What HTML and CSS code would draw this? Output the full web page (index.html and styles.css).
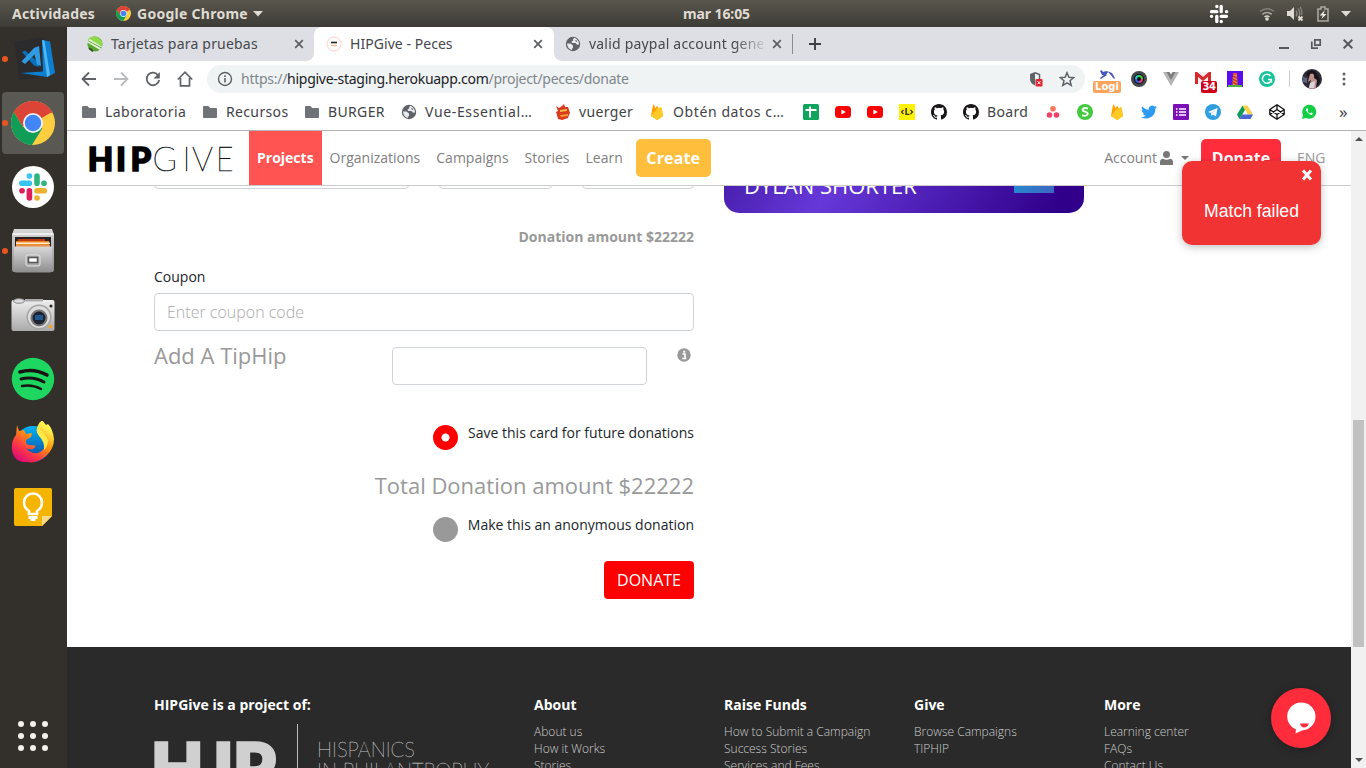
FILE: index.html
```html
<!DOCTYPE html>
<html lang="es">
<head>
<meta charset="utf-8">
<title>HIPGive - Peces</title>
<link rel="stylesheet" href="styles.css">
</head>
<body>
<svg class="defs" aria-hidden="true">
  <defs>
    <symbol id="chrome" viewBox="0 0 44 44"><circle cx="22" cy="22" r="22" fill="#ffcd40"/><path d="M22 22L3 11A22 22 0 0 1 41 11Z" fill="#db4437"/><path d="M3 11A22 22 0 0 0 21 44L31.500 27 22 22 12 26Z" fill="#0f9d58"/><path d="M3 11A22 22 0 0 1 41 12H22L12 26Z" fill="#db4437"/><circle cx="22" cy="22" r="10" fill="#f1f1f1"/><circle cx="22" cy="22" r="8.2" fill="#4285f4"/></symbol>
    <symbol id="folder" viewBox="0 0 16 14"><path d="M2 1h4.500l1.700 2H14q1 0 1 1v8q0 1-1 1H2q-1 0-1-1V2q0-1 1-1z" fill="#6f7377"/></symbol>
    <symbol id="globe" viewBox="0 0 16 16"><circle cx="8" cy="8" r="7.200" fill="#5f6368"/><path d="M2 7.500h3.500L8 9.500v2L6.500 14Q2.500 12.500 2 7.500zM9.500 1.800L8 3 8.300 4.500 6.500 5.500 7 7h3.500l1.500 1.700 2-.2Q14 4 9.500 1.800z" fill="#e9eaee"/><path d="M10.500 4.500l1.500 1" stroke="#5f6368" stroke-width="1.200"/></symbol>
    <symbol id="close" viewBox="0 0 10 10"><path d="M1.200 1.200l7.600 7.600M8.800 1.200L1.200 8.800" stroke="#5b5e62" stroke-width="1.700"/></symbol>
    <symbol id="fire" viewBox="0 0 16 16"><path d="M2 12L4 .8q.3-.8.8 0l1.900 3.400 1-1.900q.4-.6.8 0L14 12l-5.700 3.900z" fill="#ffa000"/><path d="M2 12l6-7.500 3.500-1.200q1-.5 1.200.4L14.300 12l-6 3.900z" fill="#ffca28"/></symbol>
    <symbol id="yt" viewBox="0 0 16 12"><rect width="16" height="12" rx="3.500" fill="#f00"/><path d="M6.400 3.500L10.700 6 6.400 8.500z" fill="#fff"/></symbol>
    <symbol id="github" viewBox="0 0 16 16"><path fill="#191717" d="M8 0C3.580 0 0 3.580 0 8c0 3.540 2.290 6.530 5.470 7.590.4.070.55-.17.55-.38 0-.19-.01-.82-.01-1.490-2.010.37-2.530-.49-2.690-.94-.09-.23-.48-.94-.82-1.130-.28-.15-.68-.52-.01-.53.63-.01 1.080.58 1.230.82.72 1.210 1.870.87 2.330.66.07-.52.28-.87.51-1.070-1.780-.2-3.640-.89-3.640-3.950 0-.87.31-1.590.82-2.150-.08-.2-.36-1.020.08-2.120 0 0 .67-.21 2.200.82a7.600 7.600 0 0 1 4 0c1.530-1.040 2.200-.82 2.200-.82.44 1.100.16 1.920.08 2.120.51.56.82 1.270.82 2.150 0 3.070-1.870 3.750-3.650 3.950.29.25.54.73.54 1.480 0 1.070-.01 1.930-.01 2.200 0 .21.15.46.55.38A8 8 0 0 0 16 8c0-4.420-3.580-8-8-8z"/></symbol>
    <linearGradient id="fox" x1=".8" y1="0" x2=".1" y2="1"><stop offset=".1" stop-color="#fff44f"/><stop offset=".4" stop-color="#ff980e"/><stop offset=".7" stop-color="#ff3647"/><stop offset="1" stop-color="#d00084"/></linearGradient>
    <linearGradient id="metal" x2="0" y2="1"><stop stop-color="#d8d8d8"/><stop offset="1" stop-color="#8e8e8e"/></linearGradient>
    <linearGradient id="silver" x2="0" y2="1"><stop stop-color="#eee"/><stop offset="1" stop-color="#aaa"/></linearGradient>
    <linearGradient id="foxblue" x2="0" y2="1"><stop stop-color="#00b3f4"/><stop offset="1" stop-color="#0a3f9a"/></linearGradient>
  </defs>
</svg>

<header class="topbar">
  <span class="tb-act">Actividades</span>
  <svg class="tb-chrome"><use href="#chrome"/></svg>
  <span class="tb-app">Google Chrome</span>
  <svg class="tb-caret" viewBox="0 0 10 6"><path d="M0 0h10L5 5.500z" fill="#dfdbd2"/></svg>
  <span class="tb-clock">mar 16:05</span>
  <svg class="tb-slack" viewBox="0 0 20 20"><g fill="none" stroke="#fff" stroke-width="3.300" stroke-linecap="round"><path d="M7.800 2.500h.1M2.500 7.700h5.300M12.200 2.500v5.200M17.500 7.700h.1M2.500 12.300h.1M7.800 12.300v5.200M12.200 12.300h5.300M12.200 17.500h.1"/></g></svg>
  <svg class="tb-wifi" viewBox="0 0 16 16"><g fill="none" stroke-width="1.500"><path d="M1 5.500q7-5.500 14 0" stroke="#827f77"/><path d="M3.300 8.300q4.700-3.700 9.400 0" stroke="#aaa69e"/><path d="M5.500 10.800q2.500-1.700 5 0" stroke="#dfdbd2"/></g><circle cx="8" cy="13" r="1.800" fill="#dfdbd2"/></svg>
  <svg class="tb-vol" viewBox="0 0 18 16"><path d="M1 5h3l4-4v13l-4-4H1z" fill="#dfdbd2"/><g fill="none" stroke="#8a877f" stroke-width="1.300"><path d="M10 4.500q2 3 0 6M12 2.500q3.500 5 0 10M14.200 1q2.500 4 1.500 8"/></g><path d="M12.500 10.500l4 4M16.500 10.500l-4 4" stroke="#dfdbd2" stroke-width="1.800"/></svg>
  <svg class="tb-bat" viewBox="0 0 12 16"><path d="M1 3h3V1h4v2h3v12H1z" fill="none" stroke="#aaa79f" stroke-width="1.600"/><path d="M8 4L2.700 9.500h3L4.500 13 9.500 8H6.500z" fill="#efece5"/></svg>
  <svg class="tb-caret2" viewBox="0 0 10 6"><path d="M0 0h10L5 5.500z" fill="#dfdbd2"/></svg>
</header>

<div class="desktop">
<aside class="dock">
  <div class="app run"><svg viewBox="0 0 44 44"><path d="M3.500 5L33 0l4 39-29 4z" fill="#2b2b2e"/><path d="M31 3l8 1.500 5 31.500-8 4L10 36l22-1.500z" fill="#0e7fd0"/><path d="M31 3l4.500 33 .5 4 3-1.700L33.500 3.500z" fill="#4fb6f5"/><path d="M11 15l3-1.500L28 26v4l-5-1.500z" fill="#0a70bb"/><path d="M28 9l2 20-4-1.500-2.500-10L14 27l-3.500-2.500L23 11z" fill="#309be2"/></svg></div>
  <div class="app run on"><svg><use href="#chrome"/></svg></div>
  <div class="app"><svg viewBox="0 0 44 44"><circle cx="22" cy="22" r="21" fill="#fff"/><g stroke-width="5.600" stroke-linecap="round"><path d="M18.400 11h.1M10.800 18.200h7.600" stroke="#36c5f0"/><path d="M26 11v7.200M33 18.200h.1" stroke="#2eb67d"/><path d="M11 25.700h.1M18.400 25.700v7.300" stroke="#e01e5a"/><path d="M26 25.700h7.300M26 33h.1" stroke="#ecb22e"/></g></svg></div>
  <div class="app run"><svg viewBox="0 0 44 44"><path d="M3 0h38l2 6v35q0 2-2 2H3q-2 0-2-2V6z" fill="url(#metal)"/><path d="M1.500 4h41v2h-41z" fill="#eee"/><path d="M4 8h36v12H4z" fill="#29221e"/><path d="M7 10h27v6H7z" fill="#b83a10"/><path d="M5 12h33v7H5z" fill="#f08020"/><path d="M5 13.500h34v1.500H5z" fill="#fff1d5"/><path d="M5 15.500h34v3H5z" fill="#e89244"/><path d="M3 17.500h38v24q0 2-2 2H5q-2 0-2-2z" fill="url(#metal)"/><rect x="15" y="26" width="14" height="11" rx="2" fill="#aaa" stroke="#e4e4e4"/><rect x="17.500" y="28.500" width="9" height="5" fill="#fff" stroke="#555" stroke-width="1.500"/></svg></div>
  <div class="app"><svg viewBox="0 0 44 44"><rect x=".5" y="7" width="43" height="31" rx="2" fill="url(#silver)"/><path d="M14 6h18v2.500H14z" fill="#aaa"/><ellipse cx="8" cy="8" rx="5.500" ry="2.300" fill="#ddd" stroke="#888"/><circle cx="28" cy="24" r="12.500" fill="#a5a5a5"/><circle cx="28" cy="24" r="11" fill="#ddd"/><circle cx="28" cy="25" r="8.500" fill="#777"/><circle cx="28" cy="25" r="6.500" fill="#1b2430"/><path d="M24 22h8v5h-8z" fill="#23568d"/><circle cx="40" cy="13" r="1.500" fill="#222"/><rect x="38" y="32" width="3" height="3" fill="#f5a51d"/></svg></div>
  <div class="app"><svg viewBox="0 0 44 44"><circle cx="22" cy="22" r="21.200" fill="#1ed760"/><g fill="none" stroke="#191414" stroke-linecap="round"><path d="M9 15q14-4 27 3" stroke-width="3.600"/><path d="M10 22q12-3 23 3" stroke-width="3"/><path d="M11 29q10-2 19 3" stroke-width="2.500"/></g></svg></div>
  <div class="app"><svg viewBox="0 -1 44 44"><circle cx="22" cy="22" r="18" fill="url(#foxblue)"/><path d="M6 3l2 6 5-1 2 4 6-1-1 4-5 3v3q2 3 6 2l4 1-3 3q-4 1-7-1 4 6 12 5 10-4 7-15-2-3-8-5 0-8 5-13l4 5 2-1q5 5 6 15 0 10-8 17-9 8-19 6Q3 41 1 28q-1-9 4-15z" fill="url(#fox)"/><path d="M29 0q-6 8-1 14 6 6 5 14 4-4 4-10-3-7-8-10z" fill="#ffe947"/></svg></div>
  <div class="app"><svg viewBox="0 0 44 44"><path d="M5 3h34q2 0 2 2v26L31 41H5q-2 0-2-2V5q0-2 2-2z" fill="#f5b400"/><path d="M31 41V31h10z" fill="#fbdc84"/><path d="M18 28v-3q-5-3-5-8.500a9 9 0 0 1 18 0q0 5.500-5 8.500v3z" transform="translate(0 1)" fill="none" stroke="#fff" stroke-width="2.600"/><path d="M17.500 31h9v3h-9zM19.500 34h5v2h-5z" fill="#fff"/></svg></div>
  <div class="grid9"><i></i><i></i><i></i><i></i><i></i><i></i><i></i><i></i><i></i></div>
</aside>

<section class="browser">
  <div class="tabs">
    <div class="tab left"><svg class="fav" viewBox="0 0 16 16"><circle cx="8" cy="8" r="7.600" fill="#5aa832"/><path d="M1 4q2-4 7-3.600Q13 1 15 6v4z" fill="#8ed94c"/><path d="M.5 6.500L13 14l2-3.500L2.500 3z" fill="#e9f6df"/><path d="M1.500 5l13 7" stroke="#5fae35" stroke-width="1"/><path d="M2 12l4 3.200" stroke="#33511f" stroke-width="2"/></svg><span class="t1">Tarjetas para pruebas</span><svg class="x"><use href="#close"/></svg></div>
    <div class="tabslot"><div class="tab active"><svg class="fav" viewBox="0 0 16 16"><circle cx="8" cy="8" r="7" fill="#fff" stroke="#ffd0cc"/><path d="M5 6.500h6" stroke="#222" stroke-width="1.600"/><path d="M5 9.500h6" stroke="#ffb48a" stroke-width="1.400"/></svg><span class="t2">HIPGive - Peces</span><svg class="x"><use href="#close"/></svg></div></div>
    <div class="tab right"><svg class="fav"><use href="#globe"/></svg><span class="t3">valid paypal account gene</span><svg class="x"><use href="#close"/></svg><i class="tsep"></i><svg class="plus" viewBox="0 0 12 12"><path d="M6 0v12M0 6h12" stroke="#3c4043" stroke-width="1.900"/></svg>
      <div class="wctl"><svg viewBox="0 0 12 12"><path d="M1 10h10" stroke="#56595d" stroke-width="2"/></svg><svg viewBox="0 0 12 12"><path d="M4.800 1.800h5.400v5.400H4.800zM1.800 3.500v6.700H8" fill="none" stroke="#56595d" stroke-width="1.700"/></svg><svg viewBox="0 0 12 12"><path d="M1.700 1.700l8.600 8.600M10.300 1.700l-8.600 8.600" stroke="#56595d" stroke-width="2"/></svg></div>
    </div>
  </div>

  <div class="toolbar">
    <svg viewBox="0 0 16 16"><path d="M15 8H2M8 1.500L1.500 8 8 14.500" fill="none" stroke="#5f6368" stroke-width="1.800"/></svg>
    <svg viewBox="0 0 16 16"><path d="M1 8h13M8 1.500L14.500 8 8 14.500" fill="none" stroke="#b9bbbd" stroke-width="1.800"/></svg>
    <svg viewBox="0 0 16 16"><path d="M13.300 4.500A6.300 6.300 0 1 0 14.200 9" fill="none" stroke="#5f6368" stroke-width="1.800"/><path d="M14.800 1v6.500H8.500z" fill="#5f6368"/></svg>
    <svg viewBox="0 0 16 16"><path d="M0.800 8.500L8 1.200l7.200 7.300M3.500 7v7.800h9V7" fill="none" stroke="#5f6368" stroke-width="1.700"/></svg>
    <div class="omni">
      <svg viewBox="0 0 16 16"><circle cx="8" cy="8" r="6.500" fill="none" stroke="#5f6368" stroke-width="1.400"/><path d="M8 7v4.500M8 4.300v1.600" stroke="#5f6368" stroke-width="1.600"/></svg>
      <span class="url">https://<b>hipgive-staging.herokuapp.com</b>/project/peces/donate</span>
      <svg class="shield" viewBox="0 0 16 16"><path d="M7 1L2 3v5q0 4 5 6.500z" fill="#5f6368"/><path d="M7 1.700l4.500 1.800V8" fill="none" stroke="#5f6368" stroke-width="1.500"/><rect x="7.500" y="8" width="7" height="7.500" rx="1" fill="#e3232f"/><path d="M9.500 10.200l3 3M12.500 10.200l-3 3" stroke="#fff"/></svg>
      <svg viewBox="0 0 16 16"><path d="M8 1.700l1.900 4.500 4.800.4-3.700 3.100 1.200 4.700L8 11.900l-4.200 2.500L5 9.700 1.300 6.600l4.800-.4z" fill="none" stroke="#5f6368" stroke-width="1.500"/></svg>
    </div>
    <div class="exts">
      <div class="ext login"><svg viewBox="0 0 16 11"><path d="M1 1q2-2 3 1l3-1 2 1-2 3-4 0zM8 1l5 2 3 5-1 1-4-5zM8 5L2 9l-1-1 5-4z" fill="#4655b8"/></svg><span class="badge1">Logi</span></div>
      <div class="ext"><svg viewBox="0 0 16 16"><circle cx="8" cy="8" r="8" fill="#45484b"/><circle cx="8" cy="8" r="5" fill="#0b0b12"/><path d="M5 8a3 3 0 0 1 3-3" stroke="#21d0c0" stroke-width="2" fill="none"/><path d="M8 5a3 3 0 0 1 3 3" stroke="#55c52e" stroke-width="2" fill="none"/><path d="M11 8a3 3 0 0 1-3 3" stroke="#e8407b" stroke-width="2" fill="none"/><path d="M8 11a3 3 0 0 1-3-3" stroke="#355fe8" stroke-width="2" fill="none"/></svg></div>
      <div class="ext"><svg viewBox="0 0 16 16"><path d="M0 1h4l4 6.500L12 1h4L8 15z" fill="#b4b4b4"/><path d="M3.500 1h3L8 3.500 9.500 1h3L8 9z" fill="#7c7c7c"/></svg></div>
      <div class="ext gmail"><svg viewBox="0 0 16 12"><rect width="16" height="12" rx="1" fill="#eee"/><path d="M1.500 12V1.500L8 7l6.500-5.500V12" fill="none" stroke="#d8282b" stroke-width="3"/></svg><span class="badge2">34</span></div>
      <div class="ext"><svg viewBox="0 0 16 16"><path d="M0 0h16v16H0z" fill="#5b0cf0"/><path d="M6 4h4l.5 10h-5z" fill="#f18b43"/><path d="M6 5l4 2M5.700 8l4.600 2.500M5.500 11l4.600 2.500" stroke="#c83d18" stroke-width="1.500"/><path d="M6 2h4v2H6z" fill="#ed4f35"/><path d="M1 14h14v2H1z" fill="#4cae43"/></svg></div>
      <div class="ext"><svg viewBox="0 0 16 16"><circle cx="8" cy="8" r="8" fill="#15c39a"/><path d="M11.500 5A4.500 4.500 0 1 0 12.400 8.500H9M12.400 8.500v3" fill="none" stroke="#fff" stroke-width="1.500"/></svg></div>
    </div>
    <i class="vdiv"></i>
    <svg class="avatar" viewBox="0 0 20 20"><circle cx="10" cy="10" r="10" fill="#302b35"/><path d="M4 5q6-8 12 1l2 6-4 7H7l1-9z" fill="#17151b"/><path d="M8 5q5-2 4 4l3 2-1 8q-4 2-7 0l2-8-3 2z" fill="#bd918a"/><path d="M8 14l5-2-1 7H7z" fill="#dad5df"/><path d="M1 8l4 1v5l-4-1z" fill="#5b6380"/></svg>
    <svg class="dots" viewBox="0 0 4 14"><circle cx="2" cy="2" r="1.500" fill="#5f6368"/><circle cx="2" cy="7" r="1.500" fill="#5f6368"/><circle cx="2" cy="12" r="1.500" fill="#5f6368"/></svg>
  </div>

  <div class="marks">
    <div class="bm b1"><svg class="fold"><use href="#folder"/></svg><span>Laboratoria</span></div>
    <div class="bm b2"><svg class="fold"><use href="#folder"/></svg><span>Recursos</span></div>
    <div class="bm b3"><svg class="fold"><use href="#folder"/></svg><span>BURGER</span></div>
    <div class="bm b4"><svg><use href="#globe"/></svg><span>Vue-Essential…</span></div>
    <div class="bm b5"><svg viewBox="0 0 16 16"><path d="M1 2l3 2 3-2 2-2 1 3 3 0 1 3 1 3-1 2-1 3-6 2-4-1-1-4-1-3 2-1z" fill="#d93a20"/><path d="M5 6l7-1v2L5 8z" fill="#f6bd49"/><path d="M5 11l8-1v2l-7 1z" fill="#f49a2d"/></svg><span>vuerger</span></div>
    <div class="bm b6"><svg><use href="#fire"/></svg><span>Obtén datos c…</span></div>
    <div class="bm"><svg viewBox="0 0 16 16"><rect width="16" height="16" rx="1.500" fill="#0fa45b"/><path d="M7 2.500v11M2.500 6h11" stroke="#fff" stroke-width="2"/></svg></div>
    <div class="bm"><svg class="ytb"><use href="#yt"/></svg></div>
    <div class="bm"><svg class="ytb"><use href="#yt"/></svg></div>
    <div class="bm"><svg viewBox="0 0 16 16"><path d="M0 0h16v16H0z" fill="#fff200"/><path d="M4.500 6L2.500 8l2 2M11.500 6l2 2-2 2" fill="none" stroke="#333" stroke-width="1.200"/><text x="5.500" y="11" class="ltr">L</text></svg></div>
    <div class="bm"><svg><use href="#github"/></svg></div>
    <div class="bm b7"><svg><use href="#github"/></svg><span>Board</span></div>
    <div class="bm"><svg viewBox="0 0 16 16"><circle cx="8" cy="4.800" r="2.800" fill="#f8755d"/><circle cx="4.500" cy="11" r="2.800" fill="#f1416a"/><circle cx="11.500" cy="11" r="2.800" fill="#f1416a"/></svg></div>
    <div class="bm"><svg viewBox="0 0 16 16"><circle cx="8" cy="8" r="8" fill="#43c93e"/><path d="M11 4.700Q8 3.300 6 4.700q-1.500 2 2 3t2.500 3Q8.500 12.700 5 11.200" fill="none" stroke="#fff" stroke-width="1.900"/></svg></div>
    <div class="bm"><svg><use href="#fire"/></svg></div>
    <div class="bm"><svg viewBox="0 0 24 24"><path d="M24 4.600a10 10 0 0 1-2.800.8 5 5 0 0 0 2.100-2.700 10 10 0 0 1-3.100 1.200 4.900 4.900 0 0 0-8.400 4.500A14 14 0 0 1 1.700 3.200a5 5 0 0 0 1.500 6.500A5 5 0 0 1 1 9.100a5 5 0 0 0 4 4.900 5 5 0 0 1-2.300.1 5 5 0 0 0 4.600 3.400A10 10 0 0 1 0 19.500 14 14 0 0 0 21.500 7a10 10 0 0 0 2.500-2.400z" fill="#2e9bf2"/></svg></div>
    <div class="bm"><svg viewBox="0 0 16 16"><rect width="16" height="16" rx="1" fill="#7b10b8"/><path d="M6 5h7M6 8h7M6 11h7" stroke="#fff" stroke-width="1.500"/><path d="M3 5h1.500M3 8h1.500M3 11h1.500" stroke="#fff" stroke-width="1.500"/></svg></div>
    <div class="bm"><svg viewBox="0 0 16 16"><circle cx="8" cy="8" r="8" fill="#309fe0"/><path d="M3 8l9.500-4L11 12.500 8 10.500 6.500 12l-.5-3z" fill="#fff"/><path d="M6 9l5-4-4 5z" fill="#b3d9ee"/></svg></div>
    <div class="bm"><svg viewBox="0 0 16 16"><path d="M5.500 1.500h5L16 10.500h-5z" fill="#ffcf48"/><path d="M5.500 1.500L8 6l-5.500 9L0 10.500z" fill="#0f9d58"/><path d="M5 10.500h11L13.500 15h-11z" fill="#4b65d4"/></svg></div>
    <div class="bm"><svg viewBox="0 0 16 16"><path d="M8 .8l7.200 4.700v5L8 15.200.8 10.500v-5zM8 .8v4.700M8 10.500v4.700M.8 5.500L8 10.500l7.200-5M.8 10.500L8 5.500l7.200 5" fill="none" stroke="#111" stroke-width="1.300"/></svg></div>
    <div class="bm"><svg viewBox="0 0 16 16"><path d="M1 15l1-4A7 7 0 1 1 5 14z" fill="#12ce45"/><path d="M5.500 4.500q-1.500 1.500 1 4t4.500 2.500l1-1.500-2-1-1 1Q7.500 9 6.500 7l.8-1-.8-1.800z" fill="#fff"/></svg></div>
    <span class="more">»</span>
  </div>

  <div class="viewport">
    <div class="page">
      <nav class="nav">
        <svg class="logo" viewBox="0 0 144 26"><text class="heavy" x="-1.200 27 41.500" y="24.500">HIP</text><text class="hair" x="63.500 93.500 103" y="24.500">GIV</text><text class="hair" x="127" y="24.500" textLength="17.500" lengthAdjust="spacingAndGlyphs">E</text></svg>
        <a class="cur">Projects</a><a>Organizations</a><a>Campaigns</a><a>Stories</a><a>Learn</a>
        <span class="btn create">Create</span>
        <span class="acct">Account<svg viewBox="0 0 13 14"><circle cx="6.500" cy="3.500" r="3.500" fill="#777"/><path d="M0 14v-3q0-3 3-3.300 3.500 2 7 0Q13 8 13 11v3z" fill="#777"/></svg><i class="caret"></i></span>
        <span class="btn give">Donate</span>
        <span class="lang">ENG</span>
      </nav>
      <main class="main">
        <div class="form">
          <div class="cut"><i></i><i></i><i></i></div>
          <p class="amount">Donation amount $22222</p>
          <label class="lbl">Coupon</label>
          <div class="input">Enter coupon code</div>
          <div class="tip"><h3>Add A TipHip</h3><div class="input"></div><svg viewBox="0 0 14 14"><circle cx="7" cy="7" r="6.700" fill="#999"/><path d="M5.500 6H8v4.300M5.300 10.500h4" stroke="#fff" stroke-width="1.600" fill="none"/><path d="M6.200 2.700h2v2h-2z" fill="#fff"/></svg></div>
          <div class="opt"><i class="radio sel"></i><span>Save this card for future donations</span></div>
          <h3 class="total">Total Donation amount $22222</h3>
          <div class="opt second"><i class="radio"></i><span>Make this an anonymous donation</span></div>
          <span class="submit">DONATE</span>
        </div>
        <div class="card"><span>DYLAN SHORTER</span><i></i></div>
      </main>
      <footer class="foot">
        <div class="col wide"><h4>HIPGive is a project of:</h4>
          <div class="hiplogo"><svg class="biglogo" viewBox="0 0 124 46"><text class="heavy big" x="-3 59 79" y="69.500">HIP</text></svg><i></i><svg class="phil" viewBox="0 0 180 46"><text class="hair sm" x="-1" y="34" textLength="98" lengthAdjust="spacingAndGlyphs">HISPANICS</text><text class="hair sm" x="-1" y="55" textLength="172" lengthAdjust="spacingAndGlyphs">IN PHILANTROPHY</text></svg></div>
        </div>
        <div class="col"><h4>About</h4><a>About us</a><a>How it Works</a><a>Stories</a></div>
        <div class="col"><h4>Raise Funds</h4><a>How to Submit a Campaign</a><a>Success Stories</a><a>Services and Fees</a></div>
        <div class="col"><h4>Give</h4><a>Browse Campaigns</a><a>TIPHIP</a></div>
        <div class="col"><h4>More</h4><a>Learning center</a><a>FAQs</a><a>Contact Us</a></div>
      </footer>
      <div class="toast"><svg viewBox="0 0 12 12"><path d="M2 1.500l8 9M10 1.500l-8 9" stroke="#fff" stroke-width="3"/></svg><span>Match failed</span></div>
      <div class="chat"><svg viewBox="0 0 30 32"><path d="M15 .5a14 14 0 0 1 1 28L9.500 31.500l.5-4A14 14 0 0 1 15 .5z" fill="#fff"/><path d="M14 21.500h9q-1.500 4-5 4-3 0-4-4z" fill="#ff2c3c"/></svg></div>
    </div>
    <div class="scroll"><i class="up"></i><i class="thumb"></i><i class="down"></i></div>
  </div>
</section>
</div>
</body>
</html>
```
FILE: styles.css
```css
* { box-sizing: border-box; }
body { margin: 0; width: 1366px; height: 768px; overflow: hidden; background: #fff; font-family: "Open Sans", "Noto Sans", sans-serif; font-size: 14px; color: #212529; }
svg { display: block; flex: none; }
i { display: block; flex: none; }
span { white-space: nowrap; }
.defs { position: absolute; width: 0; height: 0; }

.topbar { height: 27px; display: flex; align-items: center; background: linear-gradient(#59564d, #3d3b36); color: #dfdbd2; font: bold 14px/27px "Noto Sans", sans-serif; padding-left: 12px; }
.tb-act { width: 104px; letter-spacing: .2px; }
.tb-chrome { width: 15px; height: 15px; margin-right: 6px; }
.tb-app { width: 116px; letter-spacing: .27px; }
.tb-caret { width: 10px; height: 6px; }
.tb-clock { margin-left: 420px; width: 526px; letter-spacing: -.1px; }
.tb-slack { width: 20px; height: 20px; margin-right: 30px; }
.tb-wifi { width: 16px; height: 16px; margin-right: 11px; }
.tb-vol { width: 18px; height: 16px; margin-right: 13px; }
.tb-bat { width: 12px; height: 16px; margin-right: 12px; }
.tb-caret2 { width: 10px; height: 6px; }

.desktop { display: flex; height: 741px; }
.dock { width: 67px; flex: none; background: #33302c; padding: 1px 2px 0; display: flex; flex-direction: column; gap: 2px; }
.app { height: 62px; width: 62px; border-radius: 4px; display: flex; align-items: center; padding-left: 9px; }
.app svg { width: 44px; height: 44px; }
.app.run { padding-left: 0; }
.app.run::before { content: ""; width: 6px; height: 6px; border-radius: 50%; background: #e95420; margin-right: 3px; }
.app.on { background: #5a5853; }
.grid9 { display: grid; grid-template-columns: repeat(3, 6px); gap: 6px; margin: 181px 0 0 16px; }
.grid9 i { height: 6px; border-radius: 50%; background: #f3f1ec; }

.browser { width: 1299px; display: flex; flex-direction: column; }
.tabs { height: 34px; display: flex; background: #fff; font: 14px/34px "Noto Sans", sans-serif; color: #45484c; }
.tab { display: flex; align-items: center; height: 34px; padding-left: 20px; }
.left { width: 247px; background: #dedfe5; border-bottom-right-radius: 8px; }
.tabslot { width: 240px; background: #dedfe5; }
.active { background: #fff; border-radius: 8px 8px 0 0; padding-left: 12px; }
.right { width: 812px; background: #dedfe5; border-bottom-left-radius: 8px; padding-left: 11px; }
.fav { width: 16px; height: 16px; margin-right: 8px; }
.x { width: 10px; height: 10px; }
.t1 { width: 183px; letter-spacing: .2px; }
.t2 { width: 183px; letter-spacing: .05px; }
.t3 { width: 174px; margin-right: 9px; overflow: hidden; letter-spacing: .2px; -webkit-mask-image: linear-gradient(90deg, #000 145px, transparent 180px); mask-image: linear-gradient(90deg, #000 145px, transparent 180px); }
.tsep { width: 1px; height: 20px; background: #898b91; margin: 0 16px 0 10px; }
.plus { width: 12px; height: 12px; }
.wctl { display: flex; gap: 20px; margin-left: auto; padding-right: 12px; }
.wctl svg { width: 12px; height: 12px; }

.toolbar { height: 36px; display: flex; align-items: center; padding-left: 14px; }
.toolbar > svg { width: 16px; height: 16px; margin-right: 16px; }
.omni { width: 878px; height: 28px; border-radius: 14px; background: #eff3f4; display: flex; align-items: center; padding-left: 10px; margin-left: -2px; flex: none; }
.omni svg { width: 16px; height: 16px; }
.url { width: 787px; margin-left: 8px; font: 14px/28px "Noto Sans", sans-serif; letter-spacing: -.27px; color: #80868b; }
.url b { font-weight: normal; color: #202124; }
.omni .shield { margin-right: 15px; }
.exts { display: flex; margin-left: 6px; }
.ext { width: 32px; height: 28px; display: flex; flex-direction: column; align-items: center; justify-content: center; position: relative; }
.ext svg { width: 16px; height: 16px; }
.login { justify-content: flex-start; padding-top: 5px; }
.login svg { height: 11px; }
.badge1, .badge2 { position: absolute; color: #fff; border-radius: 2px; font: bold 10px/12px "DejaVu Sans", sans-serif; text-align: center; }
.badge1 { left: 2px; top: 16px; width: 28px; height: 12px; background: #fca35d; }
.badge2 { left: 14px; top: 16px; width: 16px; height: 12px; background: #d0021b; letter-spacing: -.5px; }
.gmail { justify-content: flex-start; padding-top: 7px; }
.gmail svg { height: 12px; }
.vdiv { width: 1px; height: 16px; background: #c9cbce; margin: 0 12px 0 6px; }
.toolbar .avatar { width: 20px; height: 20px; margin-right: 20px; }
.toolbar .dots { width: 4px; height: 14px; margin: 0; }

.marks { height: 33px; display: flex; align-items: center; padding: 0 0 3px 14px; font: 14px/30px "Noto Sans", sans-serif; color: #3f4246; }
.bm { width: 32px; display: flex; align-items: center; flex: none; letter-spacing: .35px; }
.bm svg { width: 16px; height: 16px; margin-right: 8px; flex: none; }
.bm .fold { height: 14px; }
.bm .ytb { height: 12px; }
.b1 { width: 121px; letter-spacing: .45px; } .b2 { width: 102px; } .b3 { width: 97px; } .b4 { width: 154px; letter-spacing: .65px; } .b5 { width: 94px; } .b6 { width: 154px; letter-spacing: .6px; } .b7 { width: 82px; }
.ltr { font: bold 8px "DejaVu Sans", sans-serif; fill: #333; }
.more { width: 20px; margin-left: 6px; font-size: 17px; }

.viewport { height: 638px; display: flex; border-top: 1px solid #b3b3b5; }
.page { width: 1284px; height: 637px; overflow: hidden; position: relative; }
.scroll { width: 15px; background: #f1f1f1; display: flex; flex-direction: column; align-items: center; }
.up, .down { border: 4px solid transparent; }
.up { border-bottom: 4px solid #505050; margin-top: 2px; }
.thumb { width: 11px; height: 227px; background: #c1c1c1; margin-top: 279px; }
.down { border-top: 4px solid #505050; margin-top: auto; margin-bottom: 2px; }

.nav { height: 55px; border-bottom: 1px solid #ccc; display: flex; align-items: center; padding-left: 22px; color: #808080; }
.logo { width: 144px; height: 26px; margin: 2px 16px 0 0; overflow: visible; }
.heavy { font: 900 33px Lato, sans-serif; fill: #000; stroke: #000; stroke-width: 1.600px; }
.hair { font: 100 33px Lato, sans-serif; fill: #111; stroke: #111; stroke-width: .5px; }
.nav a { padding: 0 8px; line-height: 54px; height: 54px; }
.nav .cur { background: #ff5452; color: #fff; font-weight: bold; }
.btn { height: 38px; border-radius: 5px; color: #fff; font: bold 16px/38px "Open Sans", sans-serif; text-align: center; }
.create { width: 75px; background: #ffbe3c; margin-left: 5px; letter-spacing: .15px; }
.acct { display: flex; align-items: center; margin-left: auto; line-height: 20px; padding-bottom: 1px; }
.acct svg { width: 13px; height: 14px; margin: 0 8px 0 3px; }
.caret { border: 4px solid transparent; border-top-color: #777; border-bottom: 0; }
.give { width: 80px; background: #ff2c3c; margin: 0 16px 0 12px; }
.lang { width: 54px; color: #999; line-height: 20px; padding-bottom: 1px; }

.main { display: flex; height: 461px; padding-left: 87px; }
.form { width: 540px; margin-right: 30px; display: flex; flex-direction: column; }
.cut { display: flex; gap: 30px; height: 3px; overflow: hidden; }
.cut i { height: 38px; margin-top: -35px; border: 1px solid #ced4da; border-radius: 4px; width: 113px; }
.cut i:first-child { width: 255px; }
.cut i:last-child { width: 112px; }
.amount { margin: 37px 0 0; text-align: right; font-weight: bold; color: #999; line-height: 21px; }
.lbl { margin-top: 19px; line-height: 21px; }
.input { margin-top: 6px; height: 38px; border: 1px solid #ced4da; border-radius: 4px; padding-left: 12px; font-size: 16px; font-weight: 300; line-height: 36px; color: #aaa; }
h3 { margin: 0; font-size: 22px; font-weight: 400; line-height: 27px; color: #999; }
.tip { display: flex; margin-top: 11px; height: 43px; }
.tip h3 { width: 238px; }
.tip .input { width: 255px; margin-top: 5px; flex: none; }
.tip svg { width: 14px; height: 14px; margin: 6px 0 0 29.5px; }
.opt { display: flex; justify-content: flex-end; margin-top: 37px; height: 28px; line-height: 21px; }
.radio { width: 25px; height: 25px; border-radius: 50%; background: #999; margin: 3px 10px 0 0; }
.radio.sel { background: radial-gradient(circle, #fff 3.5px, #f00 4.5px); }
.total { text-align: right; margin-top: 22px; }
.second { margin-top: 15px; }
.submit { align-self: flex-end; margin-top: 19px; width: 90px; height: 38px; background: #f00; border-radius: 4px; color: #fff; font-size: 16px; line-height: 38px; text-align: center; }
.card { width: 360px; height: 27px; overflow: hidden; border-radius: 0 0 15px 15px; background: linear-gradient(115deg, #4a20b0, #6638d9 28%, #30008a 92%); display: flex; justify-content: space-between; padding: 0 30px 0 20px; }
.card span { color: #fff; font-size: 22px; line-height: 30px; margin-top: -16px; }
.card i { width: 40px; height: 7px; background: linear-gradient(100deg, #2688d0, #3d66c0); }

.foot { height: 121px; background: #2a2a2a; padding: 47px 0 0 87px; display: flex; overflow: hidden; color: #ccc; }
.col { width: 190px; flex: none; }
.wide { width: 380px; }
.col h4 { margin: 0 0 8px; font-size: 14px; line-height: 21px; color: #fff; }
.col a { display: block; font-size: 12px; font-weight: 300; line-height: 17px; white-space: nowrap; }
.hiplogo { display: flex; height: 46px; }
.biglogo { width: 124px; height: 46px; }
.hiplogo i { width: 1px; background: #bbb; margin: 1px 20px 0 19px; }
.phil { width: 180px; height: 46px; }
.big { font-size: 68px; fill: #d0d0d0; stroke: #d0d0d0; stroke-width: 3.500px; }
.sm { font-size: 21px; fill: #bbb; stroke: #bbb; stroke-width: .3px; }

.toast { position: absolute; left: 1115px; top: 30px; width: 139px; height: 84px; border-radius: 10px; background: #f23333; box-shadow: 0 2px 8px rgba(0,0,0,.25); color: #fff; font: 17.600px/22px "Liberation Sans", sans-serif; display: flex; flex-direction: column; align-items: center; }
.toast svg { width: 12px; height: 12px; align-self: flex-end; margin: 8px 8px 19px 0; }
.chat { position: absolute; left: 1204px; top: 557px; width: 60px; height: 60px; border-radius: 50%; background: #ff2c3c; box-shadow: 0 1px 8px rgba(0,0,0,.3); display: flex; align-items: center; justify-content: center; }
.chat svg { width: 30px; height: 32px; }
```
